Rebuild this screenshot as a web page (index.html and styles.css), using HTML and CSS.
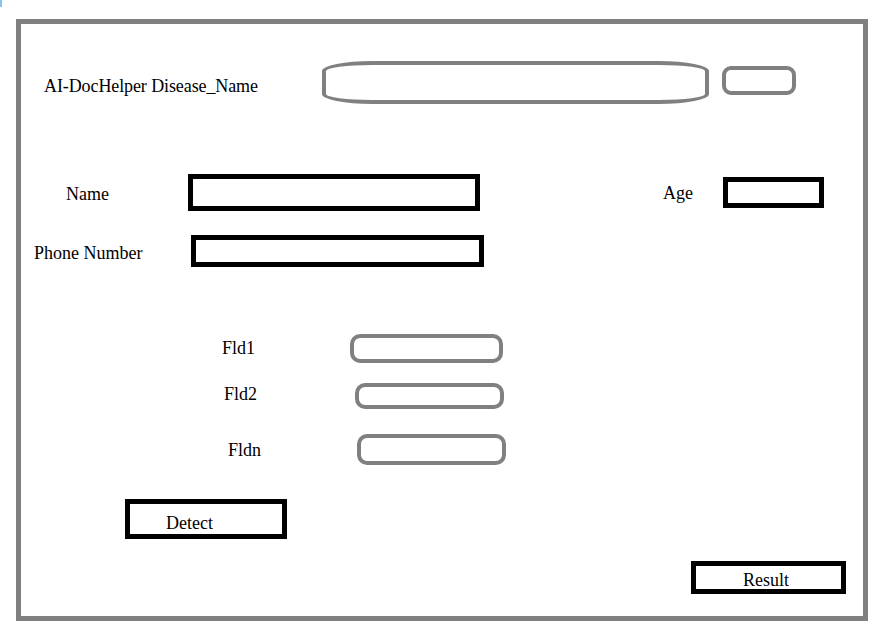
FILE: index.html
```html
<!DOCTYPE html>
<html lang="en">
<head>
  <meta charset="UTF-8" />
  <title>AI-DocHelper</title>
  <link rel="stylesheet" href="styles.css">
</head>
<body>
  <span class="mark"></span>

  <div class="frame">
    <div class="row header">
      <div class="title">AI-DocHelper Disease_Name</div>
      <input class="soft big" type="text" />
      <input class="soft tiny" type="text" />
    </div>

    <div class="row name-row">
      <label class="lbl lbl-name">Name</label>
      <input class="hard name" type="text" />
      <label class="lbl lbl-age">Age</label>
      <input class="hard age" type="text" />
    </div>

    <div class="row phone-row">
      <label class="lbl lbl-phone">Phone Number</label>
      <input class="hard phone" type="tel" />
    </div>

    <div class="row fld fld1">
      <label class="lbl">Fld1</label>
      <input class="soft field" type="text" />
    </div>

    <div class="row fld fld2">
      <label class="lbl">Fld2</label>
      <input class="soft field" type="text" />
    </div>

    <div class="row fld fldn">
      <label class="lbl">Fldn</label>
      <input class="soft field" type="text" />
    </div>

    <div class="row">
      <button class="btn detect">Detect</button>
    </div>

    <div class="row">
      <button class="btn result">Result</button>
    </div>
  </div>
</body>
</html>
```

FILE: styles.css
```css
* {
  box-sizing: border-box;
}

body {
  margin: 0;
  font-family: "Liberation Serif", "Times New Roman", serif;
  font-size: 18px;
  line-height: 20px;
  color: #000;
  background: #fff;
}

.mark {
  position: fixed;
  left: 0;
  top: 0;
  width: 2px;
  height: 7px;
  background: #8cc4f0;
}

.frame {
  margin: 19px 0 0 16px;
  width: 852px;
  height: 602px;
  border: 5px solid #808080;
}

.row {
  display: flex;
  align-items: flex-start;
}

.lbl, .title {
  display: block;
  flex-shrink: 0;
}

input {
  display: block;
  flex-shrink: 0;
  margin: 0;
  padding: 0;
  background: #fff;
  outline: none;
}

.soft {
  border: 4px solid #808080;
  border-radius: 10px;
}

.hard {
  border: 5px solid #000;
  border-radius: 0;
}

/* header */
.header {
  margin-top: 37px;
}

.title {
  margin: 15px 0 0 23px;
  width: 278px;
  letter-spacing: -0.1px;
}

.big {
  width: 387px;
  height: 43px;
  border-radius: 50px / 10px;
}

.tiny {
  margin: 5px 0 0 13px;
  width: 74px;
  height: 29px;
  border-radius: 9px;
}

/* personal data */
.name-row {
  margin-top: 70px;
}

.lbl-name {
  margin: 10px 0 0 45px;
  width: 122px;
}

.name {
  width: 292px;
  height: 37px;
}

.lbl-age {
  margin: 9px 0 0 183px;
  width: 60px;
}

.age {
  margin-top: 3px;
  width: 101px;
  height: 31px;
}

.phone-row {
  margin-top: 24px;
}

.lbl-phone {
  margin: 8px 0 0 13px;
  width: 157px;
}

.phone {
  width: 293px;
  height: 32px;
}

/* symptom fields */
.fld1 {
  margin-top: 67px;
}

.fld1 .lbl {
  margin: 4px 0 0 201px;
  width: 128px;
}

.fld1 .field {
  width: 153px;
  height: 29px;
}

.fld2 {
  margin-top: 20px;
}

.fld2 .lbl {
  margin: 1px 0 0 203px;
  width: 131px;
}

.fld2 .field {
  width: 149px;
  height: 26px;
}

.fldn {
  margin-top: 25px;
}

.fldn .lbl {
  margin: 6px 0 0 207px;
  width: 129px;
}

.fldn .field {
  width: 149px;
  height: 31px;
}

/* buttons */
.btn {
  display: block;
  font-family: inherit;
  font-size: 18px;
  line-height: 20px;
  color: #000;
  background: #fff;
  border: 5px solid #000;
  border-radius: 0;
  text-align: left;
  cursor: pointer;
}

.detect {
  margin: 34px 0 0 104px;
  width: 162px;
  height: 40px;
  padding: 7px 0 0 36px;
}

.result {
  margin: 22px 0 0 670px;
  width: 155px;
  height: 33px;
  padding: 4px 0 0 47px;
}
```
